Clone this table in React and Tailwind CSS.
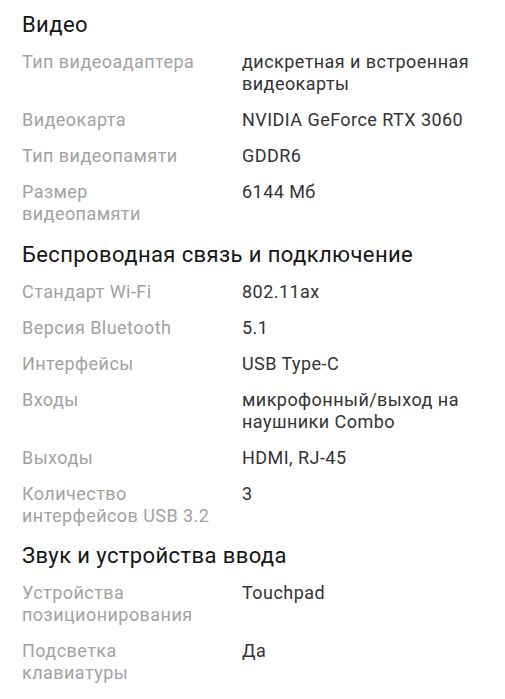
import React from "react";

const sections = [
  {
    title: "Видео",
    rows: [
      [["Тип видеоадаптера"], ["дискретная и встроенная", "видеокарты"]],
      [["Видеокарта"], ["NVIDIA GeForce RTX 3060"]],
      [["Тип видеопамяти"], ["GDDR6"]],
      [["Размер", "видеопамяти"], ["6144 Мб"]],
    ],
  },
  {
    title: "Беспроводная связь и подключение",
    rows: [
      [["Стандарт Wi-Fi"], ["802.11ax"]],
      [["Версия Bluetooth"], ["5.1"]],
      [["Интерфейсы"], ["USB Type-C"]],
      [["Входы"], ["микрофонный/выход на", "наушники Combo"]],
      [["Выходы"], ["HDMI, RJ-45"]],
      [["Количество", "интерфейсов USB 3.2"], ["3"]],
    ],
  },
  {
    title: "Звук и устройства ввода",
    rows: [
      [["Устройства", "позиционирования"], ["Touchpad"]],
      [["Подсветка", "клавиатуры"], ["Да"]],
    ],
  },
];

function Lines({ lines }) {
  return lines.map((l, i) => (
    <React.Fragment key={i}>
      {i > 0 && <br />}
      {l}
    </React.Fragment>
  ));
}

export default function App() {
  return (
    <div
      className="bg-white w-[505px] h-[699px] overflow-hidden px-[22px] pt-[11px]"
      style={{ fontFamily: "Roboto, 'Noto Sans', sans-serif" }}
    >
      {sections.map((s, si) => (
        <div key={si} className={si === 1 ? "mt-[16px]" : si === 2 ? "mt-[15px]" : ""}>
          <h2 className="text-[22px] leading-[28px] tracking-[0.4px] text-[#151515] font-normal mb-[12px]">
            {s.title}
          </h2>
          <div className="flex flex-col gap-y-[14px]">
            {s.rows.map((r, ri) => (
              <div
                key={ri}
                className="grid grid-cols-[220px_1fr] text-[18px] leading-[22px] tracking-[0.45px]"
              >
                <div className="text-[#a2a2a2] whitespace-nowrap">
                  <Lines lines={r[0]} />
                </div>
                <div className="text-[#333333] whitespace-nowrap">
                  <Lines lines={r[1]} />
                </div>
              </div>
            ))}
          </div>
        </div>
      ))}
    </div>
  );
}
